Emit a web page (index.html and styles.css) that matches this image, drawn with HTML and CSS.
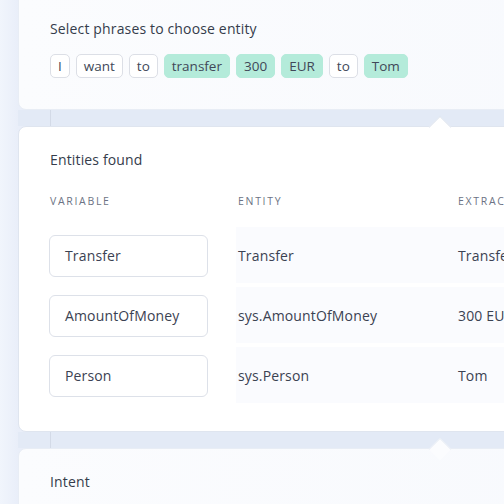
FILE: index.html
```html
<!DOCTYPE html>
<html>
<head>
<meta charset="utf-8">
<link rel="stylesheet" href="styles.css">
</head>
<body>
<div class="page">
  <section class="card card-phrases">
    <h2 class="card-title">Select phrases to choose entity</h2>
    <div class="chips">
      <span class="chip">I</span>
      <span class="chip">want</span>
      <span class="chip">to</span>
      <span class="chip chip-on">transfer</span>
      <span class="chip chip-on">300</span>
      <span class="chip chip-on">EUR</span>
      <span class="chip">to</span>
      <span class="chip chip-on">Tom</span>
    </div>
  </section>
  <div class="connector"><span class="line"></span></div>
  <section class="card card-entities notch">
    <h2 class="card-title">Entities found</h2>
    <div class="table">
      <div class="thead">
        <span class="th">Variable</span>
        <span class="th">Entity</span>
        <span class="th">Extracted</span>
      </div>
      <div class="row">
        <div class="cell-var"><span class="input">Transfer</span></div>
        <div class="cell">Transfer</div>
        <div class="cell">Transfer</div>
      </div>
      <div class="row">
        <div class="cell-var"><span class="input">AmountOfMoney</span></div>
        <div class="cell">sys.AmountOfMoney</div>
        <div class="cell">300 EUR</div>
      </div>
      <div class="row">
        <div class="cell-var"><span class="input">Person</span></div>
        <div class="cell">sys.Person</div>
        <div class="cell">Tom</div>
      </div>
    </div>
  </section>
  <div class="connector"><span class="line"></span></div>
  <section class="card card-intent notch">
    <h2 class="card-title">Intent</h2>
  </section>
</div>
</body>
</html>
```

FILE: styles.css
```css
* { box-sizing: border-box; }
html, body { margin: 0; padding: 0; }
body {
  width: 504px;
  height: 504px;
  overflow: hidden;
  background: linear-gradient(90deg, #f1f5fc 0px, #e9eef9 18px, #eef2fb 100%);
  font-family: "Open Sans", "Noto Sans", sans-serif;
  color: #353c4b;
  letter-spacing: 0.15px;
}
.page {
  padding-left: 18px;
  width: 700px;
}
.card {
  position: relative;
  background: #fff;
  border: 1px solid #dfe5ef;
  border-radius: 8px;
  padding: 0 0 0 31px;
}
.card-phrases {
  margin-top: -10px;
  height: 120px;
  padding-top: 28px;
  background: linear-gradient(90deg, #fbfcfe 0%, #f7f9fd 100%);
  border-color: #e8edf5;
}
.card-title {
  margin: 0;
  font-size: 14px;
  font-weight: 400;
  line-height: 20px;
  color: #353c4b;
}
.chips {
  display: flex;
  gap: 6px;
  margin-top: 15px;
}
.chip {
  height: 24px;
  padding: 0 7px;
  border: 1px solid #dcdfe6;
  border-radius: 5px;
  background: #fff;
  font-size: 13.5px;
  letter-spacing: 0;
  line-height: 22px;
  color: #414858;
}
.chip-on {
  background: #b4ebda;
  border-color: #b4ebda;
}
.connector {
  height: 16px;
  background: #e3eaf6;
  padding-left: 32px;
}
.line {
  display: block;
  width: 1px;
  height: 100%;
  background: #d3dae7;
}
.notch::before {
  content: "";
  position: absolute;
  left: 413px;
  top: -8px;
  width: 15px;
  height: 15px;
  background: inherit;
  border-left: 1px solid #dfe5ef;
  border-top: 1px solid #dfe5ef;
  transform: rotate(45deg);
}
.card-entities {
  height: 306px;
  padding-top: 22px;
}
.card-entities .card-title { line-height: 22px; }
.table {
  margin-top: 24px;
}
.thead {
  display: grid;
  grid-template-columns: 188px 220px 1fr;
  height: 33px;
}
.th {
  font-size: 10.5px;
  letter-spacing: 1.7px;
  text-transform: uppercase;
  color: #6c7384;
  line-height: 12px;
}
.row {
  display: grid;
  grid-template-columns: 186px 220px 1fr;
  height: 56px;
  margin-bottom: 4px;
  align-items: center;
}
.cell-var {
  height: 56px;
  display: flex;
  align-items: center;
  background: #fff;
}
.input {
  display: block;
  width: 159px;
  height: 42px;
  margin-left: -1px;
  border: 1px solid #dde1e9;
  border-radius: 6px;
  padding-left: 15px;
  font-size: 14px;
  line-height: 40px;
  color: #3b4252;
}
.cell {
  height: 56px;
  display: flex;
  align-items: center;
  padding-left: 2px;
  background: #fafbfe;
  font-size: 14px;
  color: #3b4252;
  margin-top: -2px;
}
.card-intent {
  height: 80px;
  padding-top: 23px;
  background: linear-gradient(90deg, #fbfcfe 0%, #f7f9fd 100%);
  border-color: #e8edf5;
}
.card-intent::before { background: #fbfcfe; border-color: #e8edf5; }
```
